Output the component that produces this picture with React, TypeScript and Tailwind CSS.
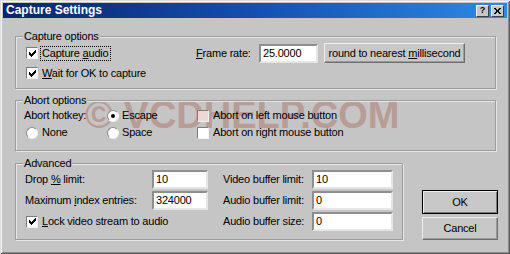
import { ReactNode } from 'react';

const face = "font-['Liberation_Sans',Arial,sans-serif]";

// classic 3d checkbox
const Check = ({ on, tint }: { on?: boolean; tint?: boolean }) => (
  <span
    className={`flex h-[12px] w-[12px] shrink-0 items-center justify-center border border-t-[#7c7c7c] border-l-[#7c7c7c] border-b-[#f2f2f2] border-r-[#f2f2f2] ${
      tint ? 'bg-[#ecd8d4]' : 'bg-white'
    }`}
  >
    {on && (
      <svg width="7" height="7" viewBox="0 0 7 7" shapeRendering="crispEdges">
        <path d="M0 2h1v1h1v1h1V3h1V2h1V1h1V0h1v3H6v1H5v1H4v1H3v1H2V6H1V5H0z" fill="#000" />
      </svg>
    )}
  </span>
);

const Radio = ({ on }: { on?: boolean }) => (
  <span className="flex h-[12px] w-[12px] shrink-0 items-center justify-center rounded-full border border-t-[#8a8a8a] border-l-[#8a8a8a] border-b-[#f2f2f2] border-r-[#f2f2f2] bg-white">
    {on && <span className="h-[4px] w-[4px] rounded-full bg-black" />}
  </span>
);

const Edit = ({ value, w }: { value: string; w: string }) => (
  <div
    className={`flex h-[19px] items-center border-2 border-t-[#8e8e8e] border-l-[#8e8e8e] border-b-[#e6e6e6] border-r-[#e6e6e6] bg-white pl-[2px] ${w}`}
  >
    {value}
  </div>
);

const Btn = ({ children, w, h, def }: { children: ReactNode; w: string; h: string; def?: boolean }) => (
  <div
    className={`flex items-center justify-center whitespace-pre bg-[#c8c8c8] ${w} ${h} ${
      def
        ? 'border border-black shadow-[inset_1px_1px_0_#efefef,inset_-1px_-1px_0_#7a7a7a]'
        : 'border border-t-[#efefef] border-l-[#efefef] border-b-[#6e6e6e] border-r-[#6e6e6e] shadow-[inset_-1px_-1px_0_#9a9a9a]'
    }`}
  >
    {children}
  </div>
);

const Group = ({ title, className, children }: { title: string; className: string; children: ReactNode }) => (
  <div
    className={`relative border border-[#9c9c9c] shadow-[1px_1px_0_#e6e6e6,inset_1px_1px_0_#e6e6e6] ${className}`}
  >
    <span className="absolute -top-[7px] left-[7px] bg-[#c5c5c5] px-[1px] leading-[13px]">{title}</span>
    {children}
  </div>
);

export default function App() {
  return (
    <div
      className={`relative flex h-[254px] w-[510px] flex-col bg-[#c5c5c5] p-[3px] text-[11px] leading-[13px] tracking-[-0.2px] text-black ${face} shadow-[inset_1px_1px_0_#dedede,inset_-1px_-1px_0_#5a5a5a,inset_2px_2px_0_#f4f4f4,inset_-2px_-2px_0_#8c8c8c]`}
    >
      {/* watermark, painted under the controls */}
      <div className="pointer-events-none absolute left-[85px] top-[96px] whitespace-pre text-[38px] font-bold leading-none tracking-normal text-[#b89c96]">
        © VCDHELP.COM
      </div>

      {/* title bar */}
      <div className="relative flex h-[15px] shrink-0 items-center bg-gradient-to-r from-[#0a246a] via-[#1450b0] to-[#2f8ae4] pl-[3px] pr-[3px] tracking-normal">
        <span className="flex-1 text-[12px] font-bold leading-[15px] text-white">Capture Settings</span>
        <div className="flex h-[12px] w-[13px] items-center justify-center border border-t-[#f2f2f2] border-l-[#f2f2f2] border-b-[#404040] border-r-[#404040] bg-[#c8c8c8] text-[9px] font-bold leading-none">
          ?
        </div>
        <div className="ml-[2px] flex h-[12px] w-[13px] items-center justify-center border border-t-[#f2f2f2] border-l-[#f2f2f2] border-b-[#404040] border-r-[#404040] bg-[#c8c8c8]">
          <svg width="7" height="6" viewBox="0 0 7 6" shapeRendering="crispEdges">
            <path d="M0 0h2v1h1v1h1V1h1V0h2v1H6v1H5v2h1v1h1v1H5V5H4V4H3v1H2v1H0V5h1V4h1V2H1V1H0z" fill="#000" />
          </svg>
        </div>
      </div>

      <div className="relative flex flex-col pl-[12px]">
        {/* Capture options */}
        <Group title="Capture options" className="mt-[18px] h-[53px] w-[481px] pl-[10px] pt-[6px]">
          <div className="flex h-[20px] items-center">
            <div className="flex w-[170px] items-center">
              <Check on />
              <span className="ml-[3px] px-[1px] outline outline-1 outline-dotted outline-black">
                Capture <u>a</u>udio
              </span>
            </div>
            <span className="w-[63px]">
              <u>F</u>rame rate:
            </span>
            <Edit value="25.0000" w="w-[59px]" />
            <div className="ml-[6px]">
              <Btn w="w-[141px]" h="h-[20px]">
                {'round to nearest '}
                <u>m</u>illisecond
              </Btn>
            </div>
          </div>
          <div className="flex h-[20px] items-center">
            <Check on />
            <span className="ml-[4px]">
              <u>W</u>ait for OK to capture
            </span>
          </div>
        </Group>

        {/* Abort options */}
        <Group title="Abort options" className="mt-[11px] h-[51px] w-[481px] pl-[8px] pt-[6px]">
          <div className="flex h-[17px] items-center">
            <span className="w-[83px]">Abort hotkey:</span>
            <div className="flex w-[90px] items-center">
              <Radio on />
              <span className="ml-[3px]">Escape</span>
            </div>
            <Check tint />
            <span className="ml-[4px]">Abort on left mouse button</span>
          </div>
          <div className="flex h-[17px] items-center">
            <div className="flex w-[83px] items-center pl-[2px]">
              <Radio />
              <span className="ml-[4px]">None</span>
            </div>
            <div className="flex w-[90px] items-center">
              <Radio />
              <span className="ml-[3px]">Space</span>
            </div>
            <Check />
            <span className="ml-[4px]">Abort on right mouse button</span>
          </div>
        </Group>

        <div className="mt-[12px] flex items-end">
          {/* Advanced */}
          <Group title="Advanced" className="flex h-[77px] w-[388px] flex-col gap-[2px] pl-[9px] pt-[6px]">
            <div className="flex h-[19px] items-center">
              <span className="w-[127px]">
                Drop <u>%</u> limit:
              </span>
              <Edit value="10" w="w-[56px]" />
              <span className="ml-[15px] w-[89px]">Video buffer limit:</span>
              <Edit value="10" w="w-[81px]" />
            </div>
            <div className="flex h-[19px] items-center">
              <span className="w-[127px]">
                Maximum <u>i</u>ndex entries:
              </span>
              <Edit value="324000" w="w-[56px]" />
              <span className="ml-[15px] w-[89px]">Audio buffer limit:</span>
              <Edit value="0" w="w-[81px]" />
            </div>
            <div className="flex h-[19px] items-center">
              <div className="flex w-[198px] items-center pl-[1px]">
                <Check on />
                <span className="ml-[4px]">
                  <u>L</u>ock video stream to audio
                </span>
              </div>
              <span className="w-[89px]">Audio buffer size:</span>
              <Edit value="0" w="w-[81px]" />
            </div>
          </Group>

          <div className="ml-[19px] flex flex-col gap-[3px]">
            <Btn w="w-[76px]" h="h-[24px]" def>
              OK
            </Btn>
            <Btn w="w-[76px]" h="h-[23px]">
              Cancel
            </Btn>
          </div>
        </div>
      </div>
    </div>
  );
}
